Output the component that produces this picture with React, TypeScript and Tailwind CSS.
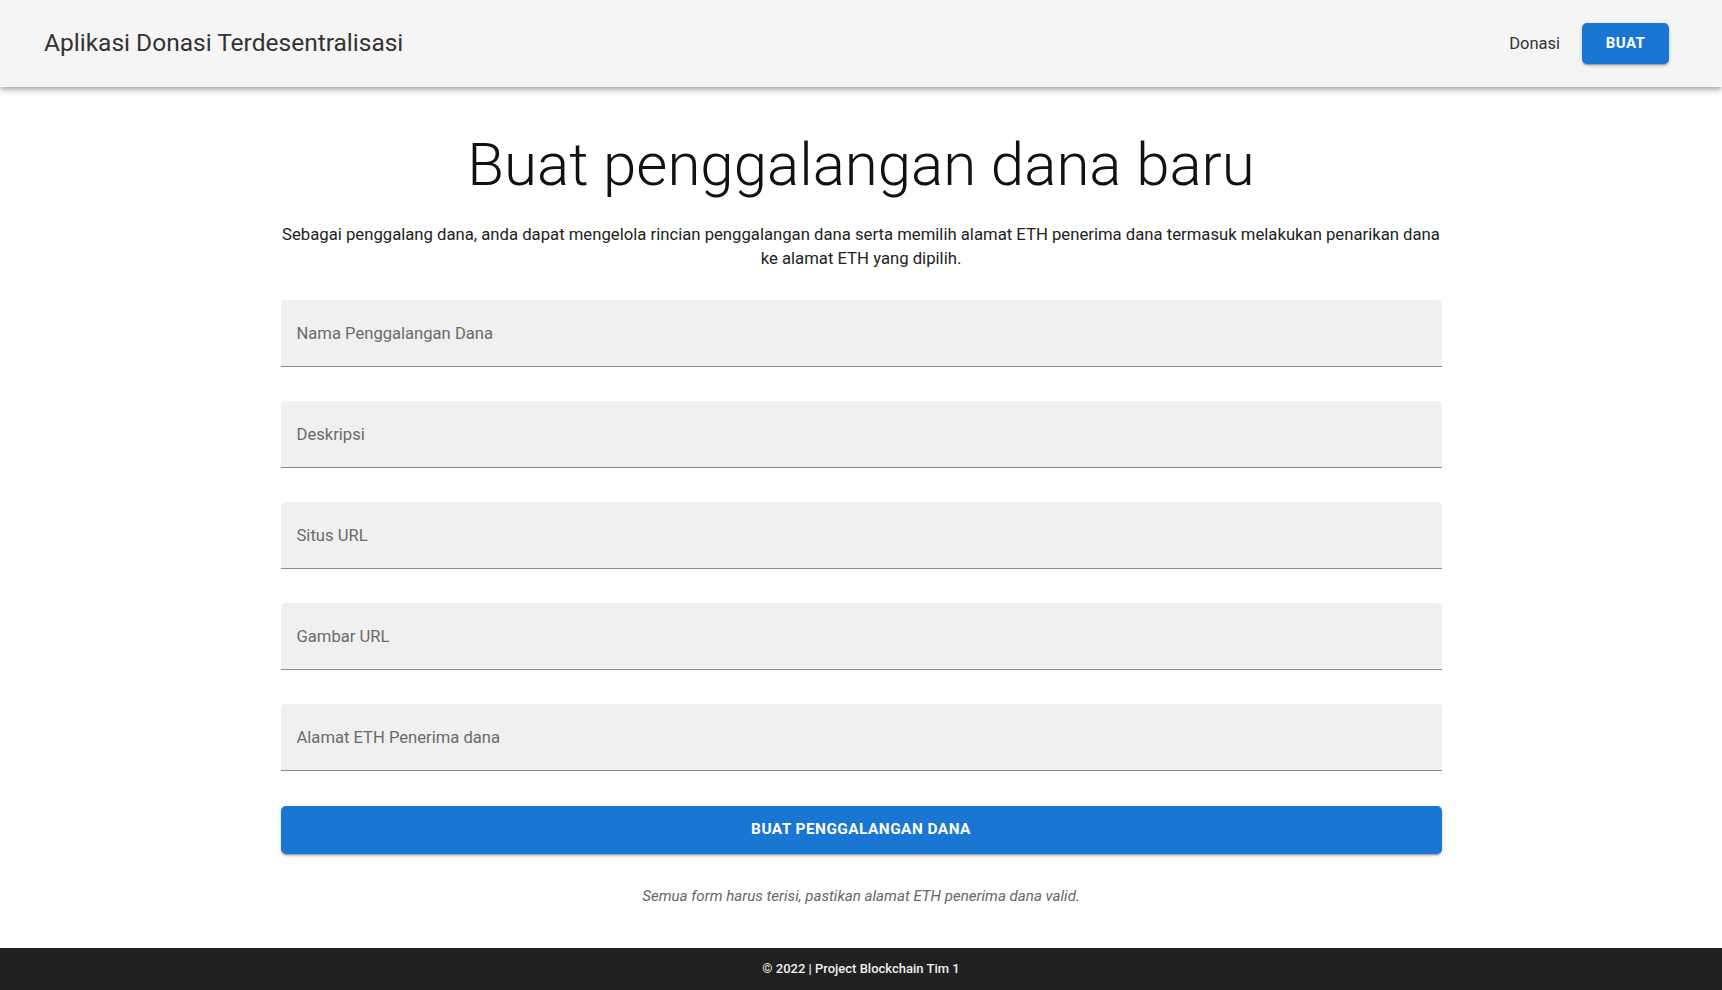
import React from 'react';

const fields = [
  'Nama Penggalangan Dana',
  'Deskripsi',
  'Situs URL',
  'Gambar URL',
  'Alamat ETH Penerima dana',
];

const App: React.FC = () => {
  return (
    <div className="min-h-screen flex flex-col bg-white font-['Roboto','Liberation_Sans',sans-serif]">
      <header className="h-[87px] bg-[#f5f5f5] flex items-center justify-between pl-[44px] pr-[53px] shrink-0 shadow-[0_2px_4px_-1px_rgba(0,0,0,0.2),0_4px_5px_0_rgba(0,0,0,0.14),0_1px_10px_0_rgba(0,0,0,0.12)] relative z-10">
        <h1 className="text-[24.5px] text-[#333]">Aplikasi Donasi Terdesentralisasi</h1>
        <div className="flex items-center">
          <span className="text-[16.5px] text-[#333] mr-[22px] pt-[1px]">Donasi</span>
          <button className="w-[87px] h-[41px] rounded-[5px] bg-[#1976d2] text-white text-[15px] font-bold tracking-[0.03em] shadow-[0_3px_1px_-2px_rgba(0,0,0,0.2),0_2px_2px_0_rgba(0,0,0,0.14),0_1px_5px_0_rgba(0,0,0,0.12)]">
            BUAT
          </button>
        </div>
      </header>

      <main className="flex-1 flex flex-col items-center">
        <div className="w-[1161px] flex flex-col">
          <h2 className="mt-[48px] text-[60px] leading-none font-light text-[#111] text-center">
            Buat penggalangan dana baru
          </h2>
          <p className="mt-[28px] text-[16.7px] leading-[24px] text-[#222] text-center">
            Sebagai penggalang dana, anda dapat mengelola rincian penggalangan dana serta memilih alamat ETH penerima dana termasuk melakukan penarikan dana
            <br />
            ke alamat ETH yang dipilih.
          </p>

          <div className="mt-[29px] flex flex-col gap-[34px]">
            {fields.map((f) => (
              <input
                key={f}
                placeholder={f}
                className="h-[67px] w-full bg-[#f0f0f0] rounded-t-[4px] border-b border-[#8c8c8c] px-[16px] text-[16.6px] text-[#333] placeholder:text-[#6b6b6b] outline-none"
              />
            ))}
          </div>

          <button className="mt-[35px] h-[48px] w-full rounded-[5px] bg-[#1976d2] text-white text-[15.4px] font-bold tracking-[0.03em] shadow-[0_3px_1px_-2px_rgba(0,0,0,0.2),0_2px_2px_0_rgba(0,0,0,0.14),0_1px_5px_0_rgba(0,0,0,0.12)]">
            BUAT PENGGALANGAN DANA
          </button>

          <p className="mt-[31px] text-[15.1px] leading-[22px] italic text-[#666] text-center">
            Semua form harus terisi, pastikan alamat ETH penerima dana valid.
          </p>
        </div>
      </main>

      <footer className="h-[42px] bg-[#212121] flex items-center justify-center shrink-0">
        <span className="text-[13px] font-medium text-[#f0f0f0]">© 2022 | Project Blockchain Tim 1</span>
      </footer>
    </div>
  );
};

export default App;
